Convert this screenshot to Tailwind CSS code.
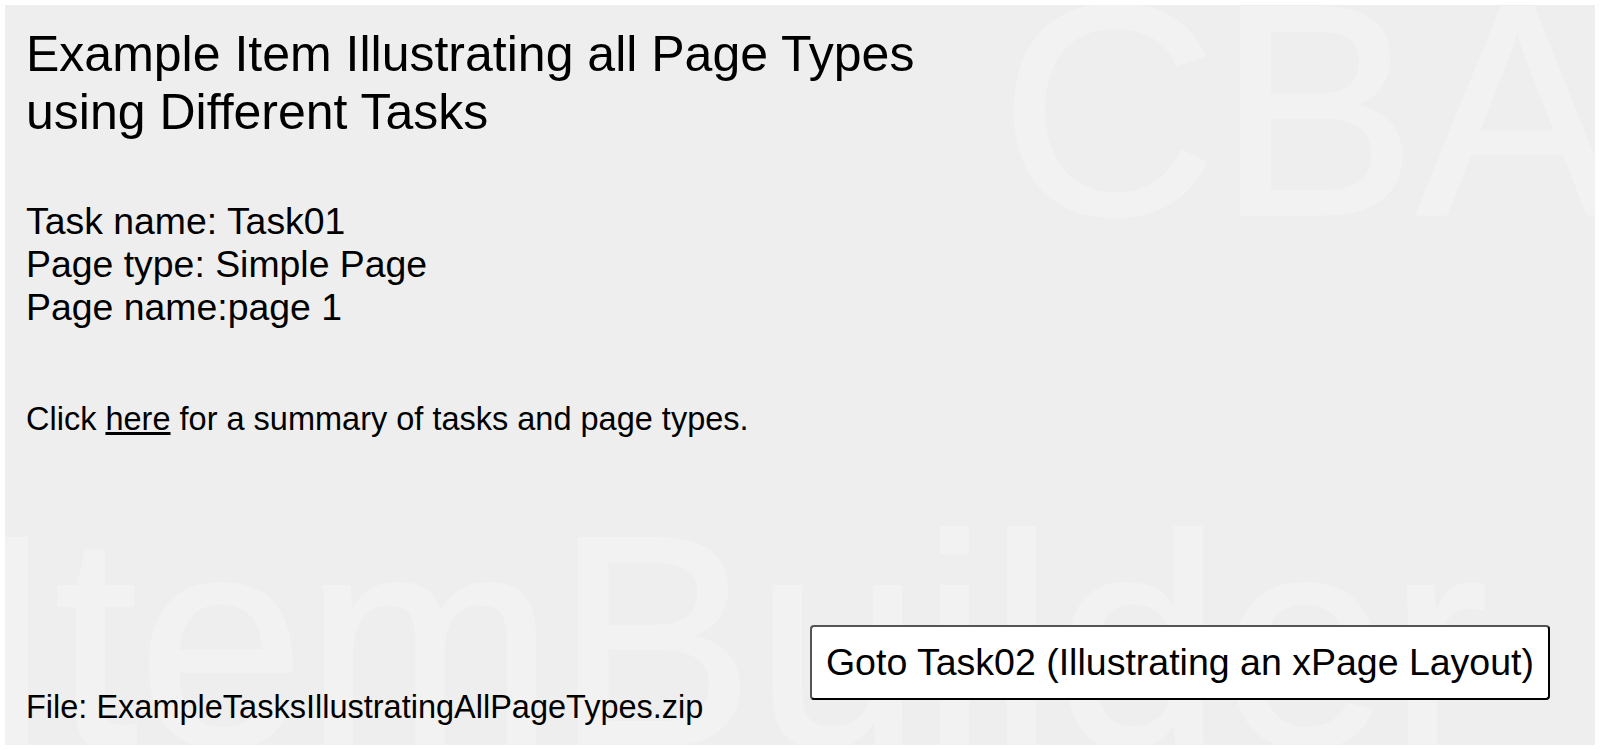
<!DOCTYPE html>
<html lang="en">
<head>
    <meta charset="UTF-8">
    <title>Example Item</title>
    <script src="https://cdn.jsdelivr.net/npm/@tailwindcss/browser@4"></script>
</head>
<body class="bg-white h-[750px] overflow-hidden font-['Liberation_Sans',Arial,sans-serif] text-black">
    <div class="relative m-[5px] h-[740px] w-[1590px] overflow-hidden bg-[#eeeeee] flex flex-col pl-[21px] pr-[22px]">
        <!-- watermark -->
        <div class="absolute left-[995px] top-[-45px] text-[300px] leading-[300px] text-[#f2f2f2] [-webkit-text-stroke:3px_#f2f2f2] select-none whitespace-nowrap">CBA</div>
        <div class="absolute left-[-34px] top-[486px] text-[300px] leading-[300px] text-[#f2f2f2] [-webkit-text-stroke:3px_#f2f2f2] select-none whitespace-nowrap">ItemBuilder</div>

        <h1 class="relative mt-[20px] w-[1000px] text-[50px] leading-[58px]">Example Item Illustrating all Page Types<br>using Different Tasks</h1>
        <div class="relative mt-[59px] text-[37.4px] leading-[43px]">
            <p>Task name: Task01</p>
            <p>Page type: Simple Page</p>
            <p>Page name:page 1</p>
        </div>
        <p class="relative mt-[70px] text-[32.5px] leading-[40px]">Click <a href="#" class="underline">here</a> for a summary of tasks and page types.</p>
        <div class="relative mt-auto mb-[20px] flex items-end justify-between pr-[23px]">
            <p class="text-[32.5px] leading-[36px]">File: ExampleTasksIllustratingAllPageTypes.zip</p>
            <button class="mb-[25px] h-[75px] rounded-[4px] border-2 border-t-[#555555] border-l-[#555555] border-r-black border-b-black bg-white px-[14px] text-[37.5px]">Goto Task02 (Illustrating an xPage Layout)</button>
        </div>
    </div>
</body>
</html>
